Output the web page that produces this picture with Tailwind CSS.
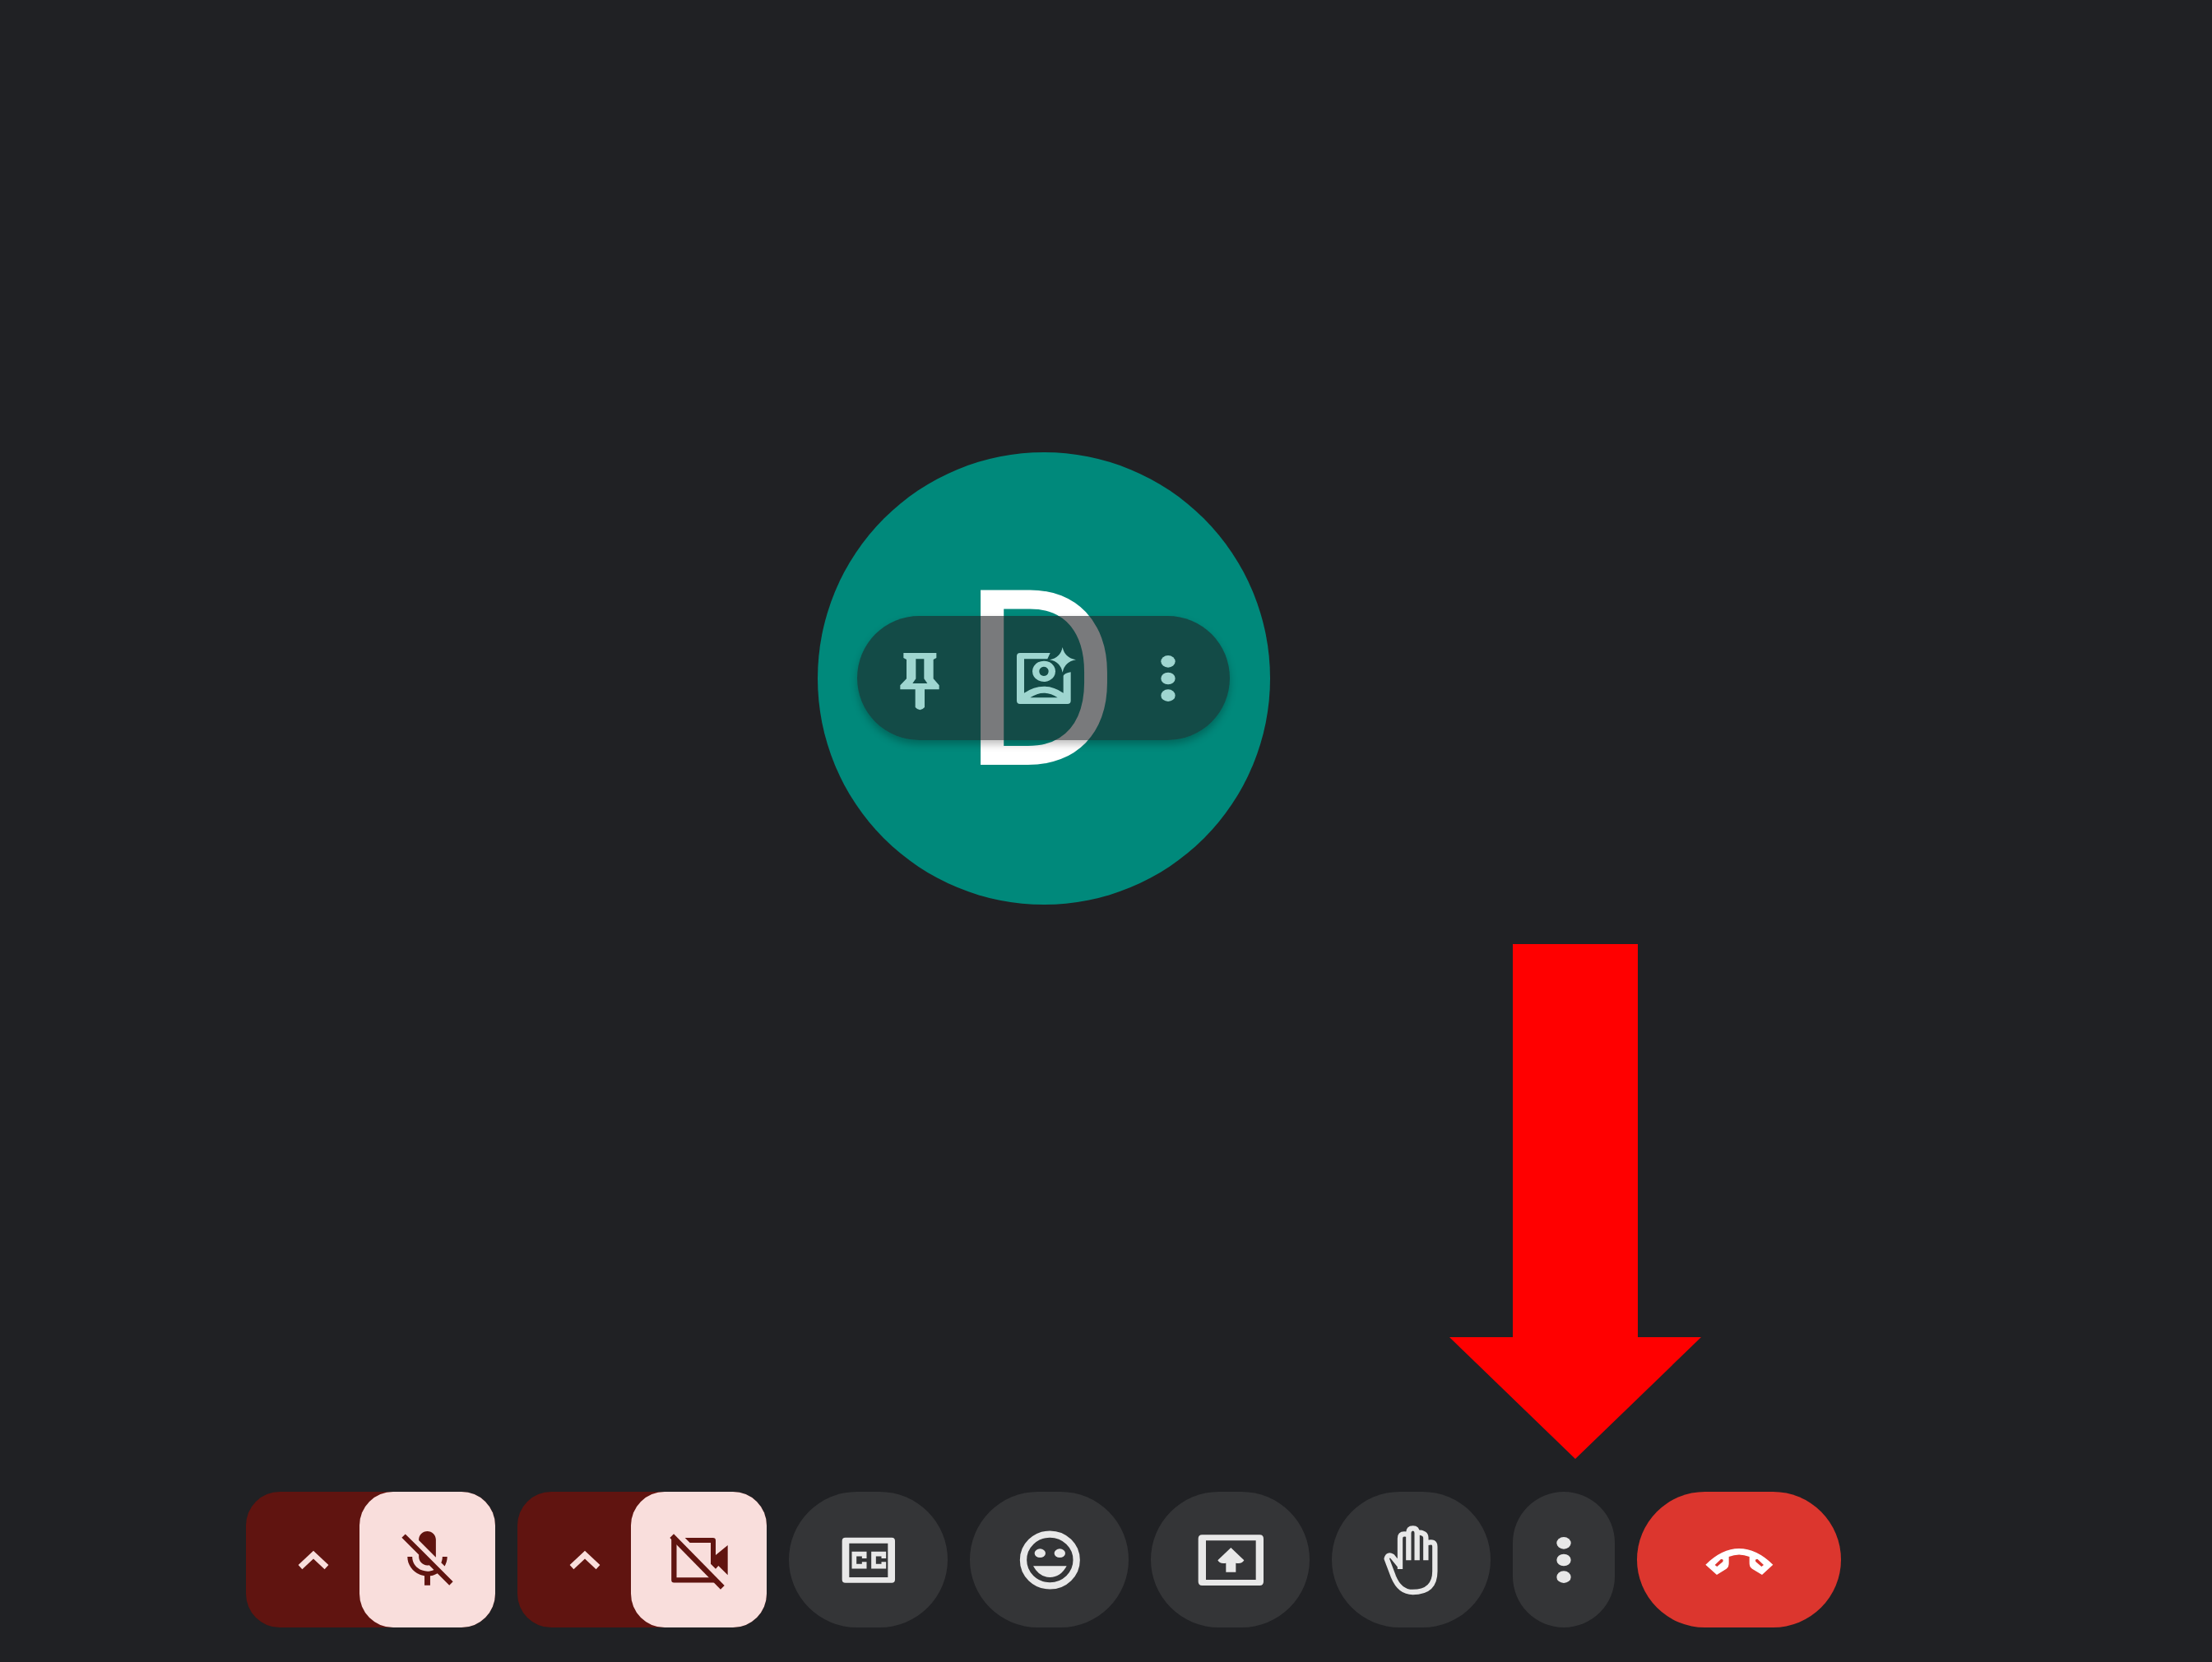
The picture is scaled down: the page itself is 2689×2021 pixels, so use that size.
<!DOCTYPE html>
<html lang="en">
<head>
<meta charset="utf-8">
<meta name="viewport" content="width=device-width, initial-scale=1">
<title>Meeting</title>
<script src="https://cdn.jsdelivr.net/npm/@tailwindcss/browser@4"></script>
</head>
<body class="flex min-h-screen flex-col bg-[#202124] pr-[152px] font-[Roboto,sans-serif]">

<!-- Participant tile -->
<main class="flex flex-1 items-center justify-center">
  <div class="relative flex size-[550px] items-center justify-center rounded-full bg-[#00897b]">
    <span class="pt-2 pr-1.5 text-[299px] leading-none text-white">D</span>
    <div class="absolute inset-0 flex items-center justify-center">
      <div class="flex h-[151px] items-center rounded-full bg-[#202124]/60 text-[#9fd6d0] shadow-[0_5px_10px_rgba(0,0,0,0.25)]">
        <button type="button" aria-label="Pin" class="flex size-[151px] items-center justify-center">
          <svg class="size-[84px]" viewBox="138 249 252 252" fill="currentColor" fill-rule="evenodd" aria-hidden="true"><path d="M205 282H325V300L314 306V376L335 400V415H282V480Q265 500 248 480V415H193V400L216 376V306L205 300ZM250 304V376L238 393H292L280 376V304Z"/></svg>
        </button>
        <button type="button" aria-label="Backgrounds and effects" class="flex size-[151px] items-center justify-center">
          <svg class="size-[84px]" viewBox="591 249 252 252" fill="currentColor" fill-rule="evenodd" aria-hidden="true">
            <path d="M630 282H740L730 304H645V428Q680 404 717 404Q754 404 788 428V365Q792 356 815 352V456Q815 468 803 468H630Q618 468 618 456V294Q618 282 630 282ZM667 445Q717 411 767 445Z"/>
            <path d="M717 311a42 38 0 1 0 .1 0ZM717 332a17 17 0 1 1-.1 0Z"/>
            <path d="M785 261Q793 300 834 307Q793 314 785 353Q777 314 738 307Q777 300 785 261Z"/>
          </svg>
        </button>
        <button type="button" aria-label="More options for this participant" class="flex size-[151px] items-center justify-center">
          <svg class="size-[84px]" viewBox="1045 249 252 252" fill="currentColor" aria-hidden="true"><ellipse cx="1171" cy="313" rx="26" ry="22"/><ellipse cx="1171" cy="375" rx="26" ry="22"/><ellipse cx="1171" cy="437" rx="26" ry="22"/></svg>
        </button>
      </div>
    </div>
  </div>
</main>

<!-- Call controls -->
<footer class="flex items-center justify-center gap-[27px] pt-[165px] pb-[42px] text-[#e8e8e8]">
  <div class="flex h-[165px] rounded-[41px] bg-[#601410]">
    <button type="button" aria-label="Audio settings" class="flex w-[163px] items-center justify-center text-[#f9dedc]">
      <svg class="size-[84px]" viewBox="174 195 252 252" fill="none" stroke="currentColor" stroke-width="21" aria-hidden="true"><path d="M252 347L300 302L348 347"/></svg>
    </button>
    <button type="button" aria-label="Turn on microphone" class="-ml-[25px] flex w-[165px] items-center justify-center rounded-[41px] bg-[#f9dedc] text-[#601410]">
      <svg class="size-[83px]" viewBox="0 0 24 24" fill="currentColor" aria-hidden="true"><path d="M19 11h-1.7c0 .74-.16 1.43-.43 2.05l1.23 1.23c.56-.98.9-2.09.9-3.28zm-4.02.17c0-.06.02-.11.02-.17V5c0-1.66-1.34-3-3-3S9 3.34 9 5v.18l5.98 5.99zM4.27 3L3 4.27l6.01 6.01V11c0 1.66 1.33 3 2.99 3 .22 0 .44-.03.65-.08l1.66 1.66c-.71.33-1.5.52-2.31.52-2.76 0-5.3-2.1-5.3-5.1H5c0 3.41 2.72 6.23 6 6.72V21h2v-3.28c.91-.13 1.77-.45 2.54-.9L19.73 21 21 19.73 4.27 3z"/></svg>
    </button>
  </div>

  <div class="flex h-[165px] rounded-[41px] bg-[#601410]">
    <button type="button" aria-label="Video settings" class="flex w-[163px] items-center justify-center text-[#f9dedc]">
      <svg class="size-[84px]" viewBox="174 195 252 252" fill="none" stroke="currentColor" stroke-width="21" aria-hidden="true"><path d="M252 347L300 302L348 347"/></svg>
    </button>
    <button type="button" aria-label="Turn on camera" class="-ml-[25px] flex w-[165px] items-center justify-center rounded-[41px] bg-[#f9dedc] text-[#601410]">
      <svg class="size-[84px]" viewBox="592 195 252 252" aria-hidden="true">
        <path fill="none" stroke="currentColor" stroke-width="19" stroke-linejoin="round" d="M626 242V394H772"/>
        <path fill="none" stroke="currentColor" stroke-width="20" d="M618 233L803 421"/>
        <path fill="currentColor" d="M666 240H768Q778 240 778 250V303L822 267V376L788 342L778 353L760 335V258H684Z"/>
      </svg>
    </button>
  </div>

  <button type="button" aria-label="Turn on captions" class="flex h-[165px] w-[193px] items-center justify-center rounded-full bg-[#343537]">
    <svg class="size-[84px]" viewBox="221 195 252 252" aria-hidden="true">
      <path fill="currentColor" fill-rule="evenodd" d="M262 239H431Q443 239 443 251V392Q443 404 431 404H262Q250 404 250 392V251Q250 239 262 239ZM276 260V384H417V260Z"/>
      <path fill="none" stroke="currentColor" stroke-width="17" d="M331 315V299H294V344H331V328M402 315V299H365V344H402V328"/>
    </svg>
  </button>

  <button type="button" aria-label="Send a reaction" class="flex h-[165px] w-[193px] items-center justify-center rounded-full bg-[#343537]">
    <svg class="size-[84px]" viewBox="882 195 252 252" fill="currentColor" aria-hidden="true">
      <ellipse cx="1009" cy="321" rx="97" ry="94" fill="none" stroke="currentColor" stroke-width="25"/>
      <ellipse cx="973" cy="296" rx="20" ry="16"/><ellipse cx="1045" cy="296" rx="20" ry="16"/>
      <path d="M948 343H1070Q1048 384 1009 384Q970 384 948 343Z"/>
    </svg>
  </button>

  <button type="button" aria-label="Present now" class="flex h-[165px] w-[193px] items-center justify-center rounded-full bg-[#343537]">
    <svg class="size-[84px]" viewBox="222 195 252 252" fill="currentColor" aria-hidden="true">
      <path fill-rule="evenodd" d="M244 229H454Q468 229 468 243V400Q468 414 454 414H244Q230 414 230 400V243Q230 229 244 229ZM258 250V393H440V250Z"/>
      <path d="M349 276L397 322Q390 336 367 332V365H331V332Q308 336 301 322Z"/>
    </svg>
  </button>

  <button type="button" aria-label="Raise hand" class="flex h-[165px] w-[193px] items-center justify-center rounded-full bg-[#343537]">
    <svg class="h-[92px] w-[84px]" viewBox="882 183 252 276" fill="none" stroke="currentColor" stroke-width="19" stroke-linejoin="round" aria-hidden="true">
      <path d="M966 354V242Q966 226 981 226Q990 226 997 228M997 322V222Q997 205 1013 205Q1028 205 1028 222V322M1028 220Q1060 220 1060 240V322M1066 258Q1093 250 1093 272V362Q1093 438 1012 438Q965 438 942 382L917 316Q922 298 938 308L966 343"/>
    </svg>
  </button>

  <div class="relative">
    <button type="button" aria-label="More options" class="flex h-[165px] w-[124px] items-center justify-center rounded-full bg-[#343537]">
      <svg class="size-[84px]" viewBox="118 196 252 252" fill="currentColor" aria-hidden="true"><ellipse cx="244" cy="260" rx="26" ry="22"/><ellipse cx="244" cy="322" rx="26" ry="22"/><ellipse cx="244" cy="384" rx="26" ry="22"/></svg>
    </button>
    <!-- Callout arrow pointing at the menu button -->
    <svg class="pointer-events-none absolute bottom-full -left-[77px] mb-10 h-[626px] w-[306px] max-w-none" viewBox="0 0 306 626" fill="#ff0000" aria-hidden="true"><path d="M77 0H229V478H306L153 626L0 478H77Z"/></svg>
  </div>

  <button type="button" aria-label="Leave call" class="flex h-[165px] w-[248px] items-center justify-center rounded-full bg-[#dc362e] text-white">
    <svg class="size-[84px]" viewBox="758 195 252 252" fill="currentColor" fill-rule="evenodd" aria-hidden="true"><path d="M762 338Q822 279 884 279Q948 279 1008 338L968 375L932 353Q921 346 922 330V309Q884 294 847 309V330Q848 346 838 353L803 375ZM796 339L818 318Q829 316 825 327L804 345ZM974 339L952 318Q941 316 945 327L966 345Z"/></svg>
  </button>
</footer>
</body>
</html>
